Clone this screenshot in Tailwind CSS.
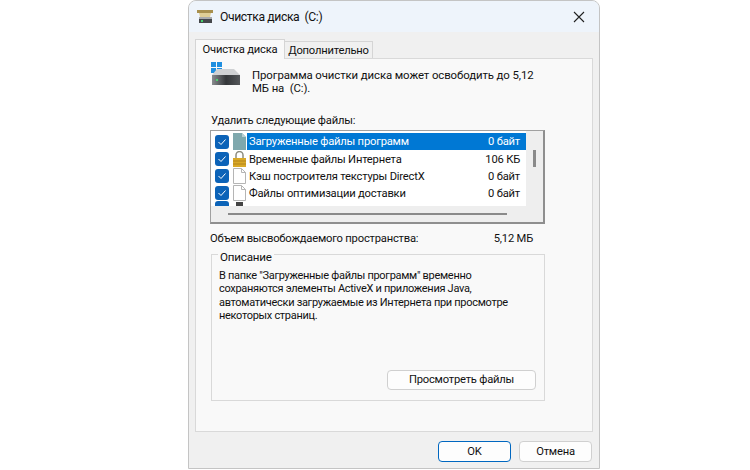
<!DOCTYPE html>
<html><head><meta charset="utf-8"><script src="https://cdn.jsdelivr.net/npm/@tailwindcss/browser@4"></script></head>
<body class="bg-white overflow-hidden">
<div class="w-[750px] h-[470px] font-['Roboto',sans-serif] text-[11.2px] tracking-[-0.2px] leading-[14px] text-[#111]">
<div class="ml-[188px] w-[412px] h-[469px] flex flex-col bg-[#f0f0f0] border border-[#c4c4c4] rounded-t-[8px] overflow-hidden">
  <div class="h-[31px] shrink-0 bg-[#eef4fb] flex items-center pl-[8px] pr-[14px]">
    <svg width="18" height="14" viewBox="0 0 18 14" class="mr-[5px] mt-[1px]"><rect x="0" y="0" width="16" height="3" fill="#a8904e"/><path d="M2 3h12l-1 4H3z" fill="#e0cf96"/><rect x="2" y="7" width="13" height="6" fill="#45484b"/><rect x="2" y="7" width="13" height="2" fill="#a9abad"/><rect x="4" y="10" width="2" height="2" fill="#45d06a"/></svg>
    <span class="text-[12.2px] tracking-[-0.4px]">Очистка диска&nbsp; (C:)</span>
    <svg width="12" height="12" viewBox="0 0 12 12" class="ml-auto"><path d="M1 1l10 10M11 1L1 11" stroke="#222" stroke-width="1.1" fill="none"/></svg>
  </div>
  <div class="flex pl-[6px] h-[26px] shrink-0 items-end relative z-10">
    <div class="h-[20px] w-[90px] bg-[#f9f9f9] border border-b-0 border-[#d5d5d5] flex items-center justify-center mb-[-1px]">Очистка диска</div>
    <div class="h-[17px] w-[88px] bg-[#f0f0f0] border border-b-0 border-l-0 border-[#d5d5d5] flex items-center justify-center pt-[1px]">Дополнительно</div>
  </div>
  <div class="mx-[6px] h-[374px] shrink-0 bg-[#f9f9f9] border border-[#d9d9d9] flex flex-col">
    <div class="flex pl-[15px] pt-[3px] h-[53px] shrink-0">
      <svg width="30" height="25" viewBox="0 0 30 25" class="shrink-0"><defs><linearGradient id="d" x1="0" x2="1" y1="0" y2="0"><stop offset="0" stop-color="#8a8d90"/><stop offset="0.5" stop-color="#34373a"/><stop offset="1" stop-color="#55585b"/></linearGradient></defs><g fill="#1f8fe0"><rect x="0" y="0" width="5" height="5"/><rect x="6" y="0" width="5" height="5"/><rect x="0" y="6" width="5" height="5"/><rect x="6" y="6" width="5" height="5"/></g><path d="M1 13 L6 7 H23 L29 13z" fill="#cfd1d3"/><rect x="1" y="13" width="28" height="10" fill="url(#d)"/><rect x="5" y="17" width="2" height="2" fill="#4fd06e"/></svg>
      <p class="ml-[11px] w-[300px] pt-[7px] leading-[13px] text-[11.4px] tracking-[-0.1px]">Программа очистки диска может освободить до 5,12 МБ на&nbsp; (C:).</p>
    </div>
    <div class="pl-[15px] h-[18px] shrink-0 pt-[2px]">Удалить следующие файлы:</div>
    <div class="ml-[14px] w-[335px] h-[94px] shrink-0 border border-[#a0a0a0] bg-[#eeeeee] border-r-[2px] border-b-[2px] border-r-[#8f8f8f] border-b-[#8f8f8f] flex flex-col overflow-hidden">
      <div class="flex h-[75px] shrink-0 overflow-hidden">
        <div class="w-[315px] bg-white flex flex-col overflow-hidden pt-[2px]">
          <div class="flex items-center h-[17px] shrink-0">
            <span class="w-[14px] h-[14px] ml-[4px] rounded-[3px] bg-[#0c63b8] flex items-center justify-center shrink-0"><svg width="10" height="10" viewBox="0 0 10 10"><path d="M1.5 5l2.5 2.5 4.5-5" stroke="#fff" fill="none" stroke-width="1"/></svg></span>
            <svg width="13" height="17" viewBox="0 0 13 17" class="ml-[4px] shrink-0"><path d="M0 0h9l4 4v13H0z" fill="#7fa8ad"/><path d="M9 0l4 4H9z" fill="#b8cfd2"/></svg>
            <div class="ml-[1px] flex-1 h-[17px] bg-[#0078d4] text-white flex items-center justify-between pl-[2px] pr-[6px] pt-[1px]"><span>Загруженные файлы программ</span><span>0 байт</span></div>
          </div>
          <div class="flex items-center h-[17px] shrink-0">
            <span class="w-[14px] h-[14px] ml-[4px] rounded-[3px] bg-[#0c63b8] flex items-center justify-center shrink-0"><svg width="10" height="10" viewBox="0 0 10 10"><path d="M1.5 5l2.5 2.5 4.5-5" stroke="#fff" fill="none" stroke-width="1"/></svg></span>
            <svg width="13" height="16" viewBox="0 0 13 16" class="ml-[4px] shrink-0"><path d="M3 7V4a3.5 3.5 0 0 1 7 0v3" stroke="#8d8d80" stroke-width="1.5" fill="none"/><rect x="0" y="7" width="13" height="9" fill="#d9a928"/><path d="M0 10h13M0 13h13" stroke="#b3831a"/></svg>
            <div class="ml-[1px] flex-1 flex items-center justify-between pl-[2px] pr-[6px] pt-[2px]"><span>Временные файлы Интернета</span><span>106 КБ</span></div>
          </div>
          <div class="flex items-center h-[17px] shrink-0">
            <span class="w-[14px] h-[14px] ml-[4px] rounded-[3px] bg-[#0c63b8] flex items-center justify-center shrink-0"><svg width="10" height="10" viewBox="0 0 10 10"><path d="M1.5 5l2.5 2.5 4.5-5" stroke="#fff" fill="none" stroke-width="1"/></svg></span>
            <svg width="13" height="16" viewBox="0 0 13 16" class="ml-[4px] shrink-0"><path d="M.5.5h8l4 4v11H.5z" fill="#fff" stroke="#b5b5b5"/><path d="M8.5.5v4h4" fill="none" stroke="#b5b5b5"/></svg>
            <div class="ml-[1px] flex-1 flex items-center justify-between pl-[2px] pr-[6px] pt-[2px]"><span>Кэш построителя текстуры DirectX</span><span>0 байт</span></div>
          </div>
          <div class="flex items-center h-[17px] shrink-0">
            <span class="w-[14px] h-[14px] ml-[4px] rounded-[3px] bg-[#0c63b8] flex items-center justify-center shrink-0"><svg width="10" height="10" viewBox="0 0 10 10"><path d="M1.5 5l2.5 2.5 4.5-5" stroke="#fff" fill="none" stroke-width="1"/></svg></span>
            <svg width="13" height="16" viewBox="0 0 13 16" class="ml-[4px] shrink-0"><path d="M.5.5h8l4 4v11H.5z" fill="#fff" stroke="#b5b5b5"/><path d="M8.5.5v4h4" fill="none" stroke="#b5b5b5"/></svg>
            <div class="ml-[1px] flex-1 flex items-center justify-between pl-[2px] pr-[6px] pt-[2px]"><span>Файлы оптимизации доставки</span><span>0 байт</span></div>
          </div>
          <div class="flex items-start h-[5px] shrink-0 overflow-hidden">
            <span class="w-[14px] h-[14px] ml-[4px] rounded-[3px] bg-[#0c63b8] shrink-0"></span>
            <span class="w-[7px] h-[5px] ml-[7px] mt-[1px] bg-[#444]"></span>
          </div>
        </div>
        <div class="flex-1 flex justify-center pt-[19px]"><div class="w-[3px] h-[17px] bg-[#8a8a8a]"></div></div>
      </div>
      <div class="flex-1 pl-[17px] pt-[7px]"><div class="w-[279px] h-[2px] bg-[#8a8a8a]"></div></div>
    </div>
    <div class="flex justify-between pl-[14px] pr-[59px] pt-[8px] h-[24px] shrink-0"><span>Объем высвобождаемого пространства:</span><span>5,12 МБ</span></div>
    <fieldset class="ml-[15px] w-[334px] h-[153px] shrink-0 border border-[#d9d9d9] px-[7px] min-w-0">
      <legend class="px-[2px] ml-[-1px] text-[11.6px] leading-[12px] relative top-[3px]">Описание</legend>
      <p class="pt-[9px] leading-[13.3px] w-[315px] text-[11px] tracking-[-0.3px]">В папке "Загруженные файлы программ" временно сохраняются элементы ActiveX и приложения Java, автоматически загружаемые из Интернета при просмотре некоторых страниц.</p>
      <div class="flex justify-end mt-[48px] mr-[1px]"><div class="w-[149px] h-[20px] bg-[#fdfdfd] border border-[#d0d0d0] rounded-[4px] flex items-center justify-center">Просмотреть файлы</div></div>
    </fieldset>
  </div>
  <div class="flex justify-end gap-[8px] pr-[7px] pt-[9px]">
    <div class="w-[73px] h-[21px] bg-[#fdfdfd] border border-[#0067c0] rounded-[4px] flex items-center justify-center">OK</div>
    <div class="w-[73px] h-[21px] bg-[#fdfdfd] border border-[#d0d0d0] rounded-[4px] flex items-center justify-center">Отмена</div>
  </div>
</div>
</div>
</body></html>
